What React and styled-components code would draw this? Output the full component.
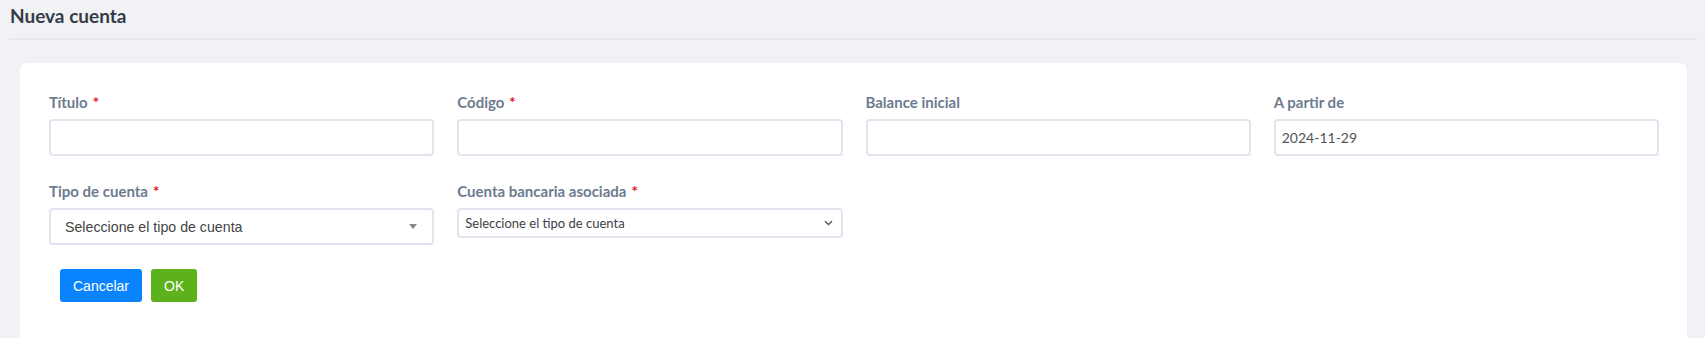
import React from "react";
import styled, { createGlobalStyle } from "styled-components";

const GlobalStyle = createGlobalStyle`
  html, body { margin: 0; padding: 0; }
  body {
    background: #f1f2f6;
    font-family: Lato, "Open Sans", sans-serif;
  }
  * { box-sizing: border-box; }
`;

const Page = styled.div`
  min-height: 338px;
  display: flex;
  flex-direction: column;
`;

const Header = styled.header`
  padding: 4px 8px 0 9px;
`;

const Title = styled.h1`
  margin: 0;
  padding: 0 0 10px 1px;
  font-size: 19px;
  line-height: 24px;
  font-weight: 700;
  color: #343b47;
  border-bottom: 2px solid #e5e7eb;
`;

const Card = styled.section`
  margin: 23px 18px 0 20px;
  flex: 1;
  background: #ffffff;
  border-radius: 7px 7px 0 0;
  padding: 29px 28px 0 29px;
`;

const Grid = styled.div`
  display: grid;
  grid-template-columns: repeat(4, 1fr);
  column-gap: 23px;
  row-gap: 25px;
  align-items: start;
`;

const Field = styled.div`
  display: flex;
  flex-direction: column;
`;

const Label = styled.label`
  font-size: 15px;
  line-height: 20px;
  font-weight: 700;
  color: #6d7b8f;
  margin-bottom: 7px;
`;

const Req = styled.span`
  color: #e3132c;
  margin-left: 5px;
`;

const TextInput = styled.input`
  height: 37px;
  width: 100%;
  border: 2px solid #e0e4ef;
  border-radius: 4px;
  padding: 0 6px;
  font-family: Lato, sans-serif;
  font-size: 14px;
  color: #555;
  background: #fff;
  outline: none;
`;

const Select2 = styled.div`
  height: 37px;
  border: 2px solid #e0e4ef;
  border-radius: 4px;
  padding: 0 14px;
  display: flex;
  align-items: center;
  justify-content: space-between;
  font-family: "Liberation Sans", Arial, sans-serif;
  font-size: 14.2px;
  color: #444;
`;

const Caret = styled.span`
  width: 0;
  height: 0;
  border-left: 4px solid transparent;
  border-right: 4px solid transparent;
  border-top: 5px solid #888;
  margin-right: 1px;
`;

const NativeSelect = styled.div`
  height: 30px;
  border: 2px solid #e0e4ef;
  border-radius: 4px;
  padding: 0 8px 0 6px;
  display: flex;
  align-items: center;
  justify-content: space-between;
  font-size: 13px;
  color: #3b3f45;
`;

const Actions = styled.div`
  display: flex;
  gap: 9px;
  margin: 24px 0 0 11px;
`;

const Button = styled.button`
  height: 33px;
  padding: 0 13px;
  border: none;
  border-radius: 3px;
  font-family: "Liberation Sans", Arial, sans-serif;
  font-size: 14px;
  color: #fff;
  background: ${(p) => (p.$variant === "ok" ? "#5db21b" : "#0a84fe")};
  cursor: pointer;
`;

const Chevron = () => (
  <svg width="9" height="6" viewBox="0 0 9 6" fill="none">
    <path d="M1 1.2l3.5 3.4L8 1.2" stroke="#555" strokeWidth="1.4" />
  </svg>
);

export default function App() {
  return (
    <Page>
      <GlobalStyle />
      <Header>
        <Title>Nueva cuenta</Title>
      </Header>
      <Card>
        <Grid>
          <Field>
            <Label>
              Título<Req>*</Req>
            </Label>
            <TextInput type="text" />
          </Field>
          <Field>
            <Label>
              Código<Req>*</Req>
            </Label>
            <TextInput type="text" />
          </Field>
          <Field>
            <Label>Balance inicial</Label>
            <TextInput type="text" />
          </Field>
          <Field>
            <Label>A partir de</Label>
            <TextInput type="text" defaultValue="2024-11-29" />
          </Field>
          <Field>
            <Label>
              Tipo de cuenta<Req>*</Req>
            </Label>
            <Select2>
              Seleccione el tipo de cuenta
              <Caret />
            </Select2>
          </Field>
          <Field>
            <Label>
              Cuenta bancaria asociada<Req>*</Req>
            </Label>
            <NativeSelect>
              Seleccione el tipo de cuenta
              <Chevron />
            </NativeSelect>
          </Field>
        </Grid>
        <Actions>
          <Button>Cancelar</Button>
          <Button $variant="ok">OK</Button>
        </Actions>
      </Card>
    </Page>
  );
}
